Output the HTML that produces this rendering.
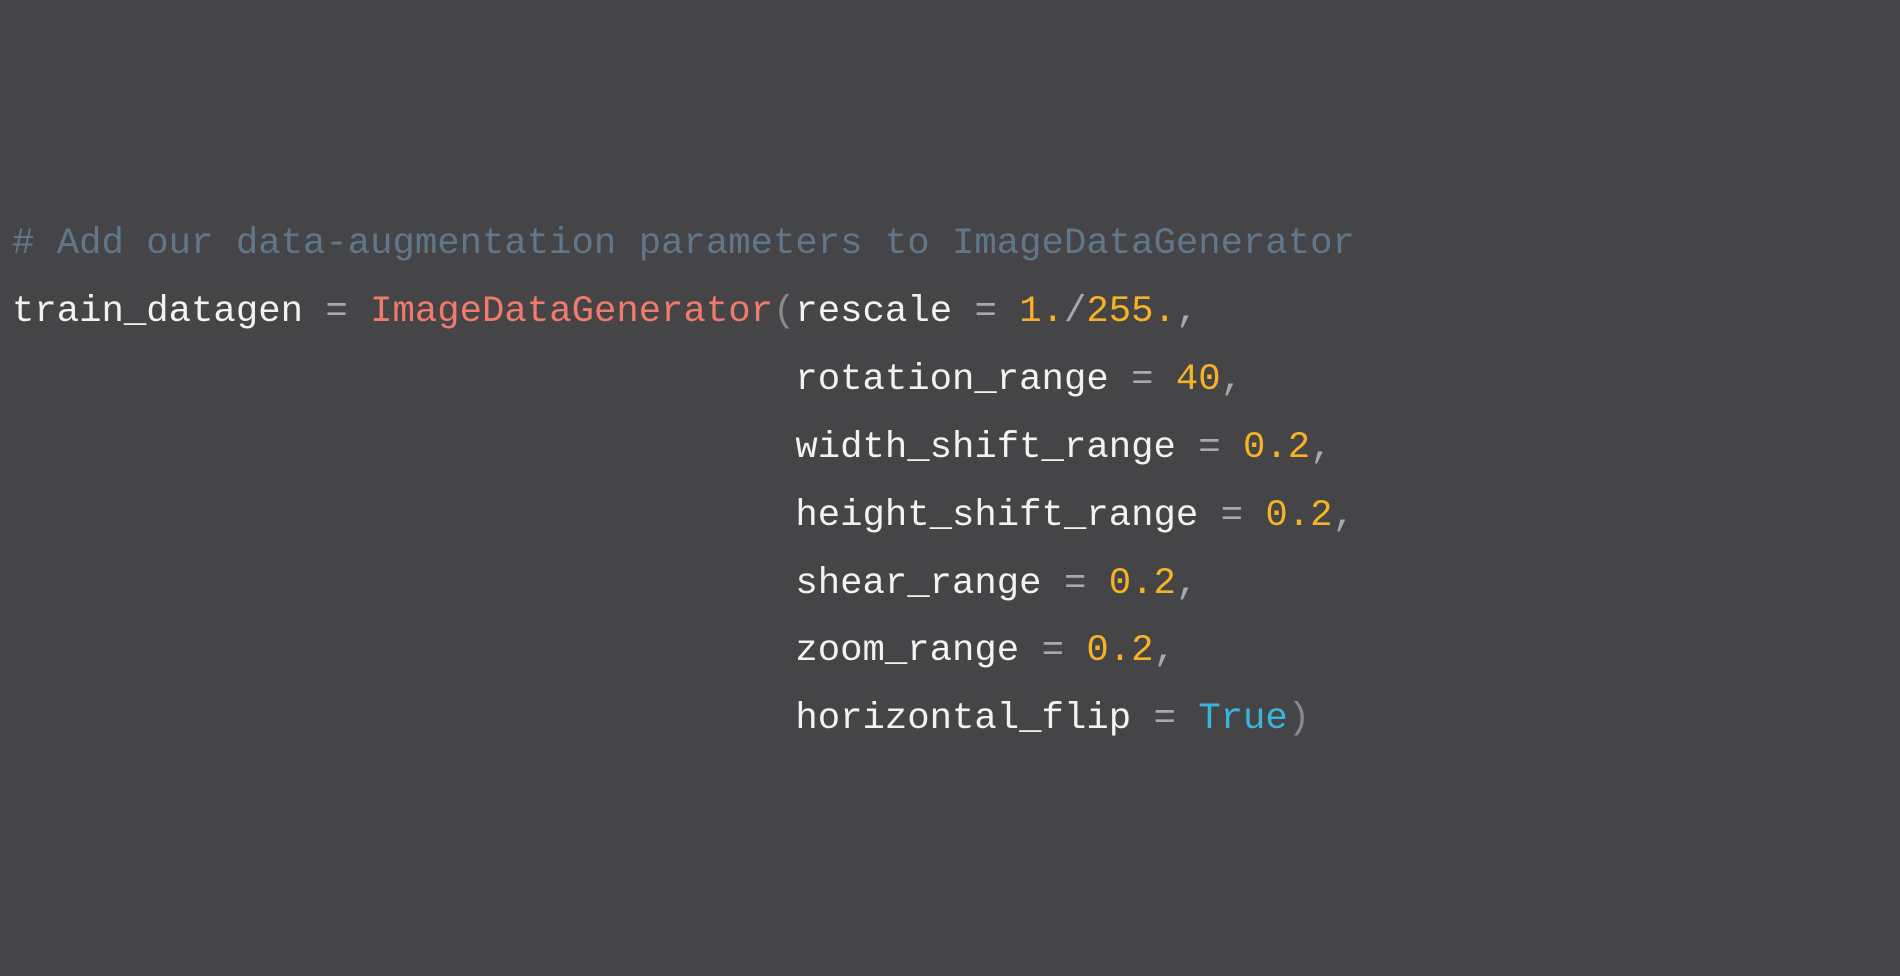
<!DOCTYPE html>
<html><head><meta charset="utf-8"><style>
html,body{margin:0;padding:0;background:#454547;width:1900px;height:976px;overflow:hidden}
pre{position:absolute;left:12px;top:211px;margin:0;font-family:"Liberation Mono",monospace;font-size:37.3px;line-height:67.9px;color:#f2f2f2}
.c{color:#607789}.f{color:#f27a6c}.n{color:#f7b325}.o{color:#a9a9ab}.p{color:#8a8a8c}.k{color:#38b7dc}
</style></head><body><pre><span class="c"># Add our data-augmentation parameters to ImageDataGenerator</span>
train_datagen <span class="o">=</span> <span class="f">ImageDataGenerator</span><span class="p">(</span>rescale <span class="o">=</span> <span class="n">1.</span><span class="o">/</span><span class="n">255.</span><span class="o">,</span>
                                   rotation_range <span class="o">=</span> <span class="n">40</span><span class="o">,</span>
                                   width_shift_range <span class="o">=</span> <span class="n">0.2</span><span class="o">,</span>
                                   height_shift_range <span class="o">=</span> <span class="n">0.2</span><span class="o">,</span>
                                   shear_range <span class="o">=</span> <span class="n">0.2</span><span class="o">,</span>
                                   zoom_range <span class="o">=</span> <span class="n">0.2</span><span class="o">,</span>
                                   horizontal_flip <span class="o">=</span> <span class="k">True</span><span class="p">)</span></pre></body></html>
